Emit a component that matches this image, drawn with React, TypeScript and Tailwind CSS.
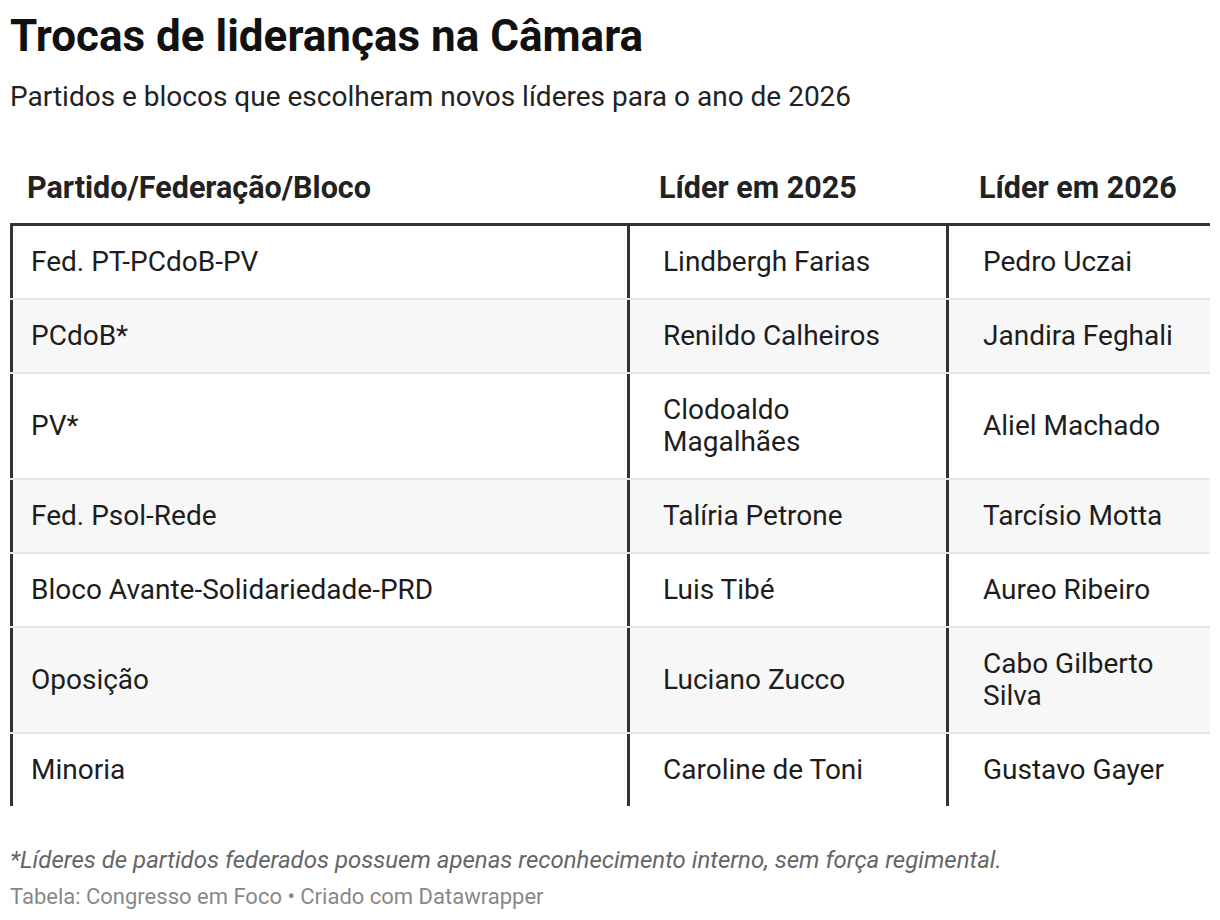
import React from "react";

const rows: [string, string, string][] = [
  ["Fed. PT-PCdoB-PV", "Lindbergh Farias", "Pedro Uczai"],
  ["PCdoB*", "Renildo Calheiros", "Jandira Feghali"],
  ["PV*", "Clodoaldo Magalhães", "Aliel Machado"],
  ["Fed. Psol-Rede", "Talíria Petrone", "Tarcísio Motta"],
  ["Bloco Avante-Solidariedade-PRD", "Luis Tibé", "Aureo Ribeiro"],
  ["Oposição", "Luciano Zucco", "Cabo Gilberto Silva"],
  ["Minoria", "Caroline de Toni", "Gustavo Gayer"],
];

export default function App() {
  return (
    <div
      className="w-[1220px] h-[920px] bg-white px-[10px] pt-[12px] text-[#1d1d1d]"
      style={{ fontFamily: "Roboto, 'Noto Sans', sans-serif" }}
    >
      <h1 className="text-[44px] leading-[48px] font-bold text-[#111]">
        Trocas de lideranças na Câmara
      </h1>
      <p className="mt-[21px] text-[28px] leading-[32px] text-[#222]">
        Partidos e blocos que escolheram novos líderes para o ano de 2026
      </p>

      <div className="mt-[59px] w-[1200px]">
        <div className="grid grid-cols-[617px_319px_264px] pb-[19px] border-b-[3px] border-[#333] text-[30.5px] leading-[32px] font-bold text-[#222]">
          <div className="pl-[17px]">Partido/Federação/Bloco</div>
          <div className="pl-[32px]">Líder em 2025</div>
          <div className="pl-[33px]">Líder em 2026</div>
        </div>
        {rows.map((r, i) => (
          <div
            key={i}
            className={`grid grid-cols-[617px_319px_264px] text-[28px] leading-[32px] ${
              i % 2 === 1 ? "bg-[#f7f7f7]" : "bg-white"
            } ${i < rows.length - 1 ? "border-b-2 border-[#e6e6e6]" : ""}`}
          >
            <div className="border-l-[3px] border-[#333] pl-[18px] py-[20px] flex items-center">
              {r[0]}
            </div>
            <div className="border-l-[3px] border-[#333] pl-[33px] py-[20px] flex items-center">
              <span className="w-[235px]">{r[1]}</span>
            </div>
            <div className="border-l-[3px] border-[#333] pl-[34px] pr-[6px] py-[20px] flex items-center">
              <span>{r[2]}</span>
            </div>
          </div>
        ))}
      </div>

      <p className="mt-[39px] text-[24px] leading-[30px] italic text-[#666]">
        *Líderes de partidos federados possuem apenas reconhecimento interno, sem força regimental.
      </p>
      <p className="mt-[8px] text-[22px] leading-[28px] text-[#888]">
        Tabela: Congresso em Foco • Criado com Datawrapper
      </p>
    </div>
  );
}
